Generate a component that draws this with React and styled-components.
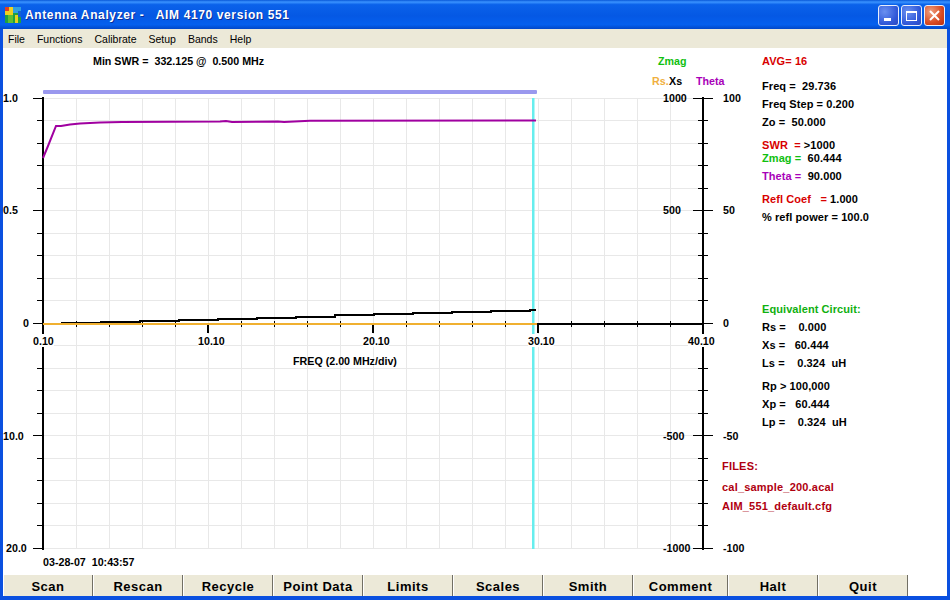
import React from 'react';
import styled, { createGlobalStyle } from 'styled-components';

const Global = createGlobalStyle`
  html, body { margin: 0; padding: 0; background: #fff; }
  #root { width: 950px; height: 600px; overflow: hidden; }
`;

const Window = styled.div`
  width: 950px; height: 600px; display: flex; flex-direction: column; box-sizing: border-box;
  background: #0a50e0; font-family: "Liberation Sans", Arial, sans-serif;
`;
const TitleBar = styled.div`
  height: 29px; flex: none; box-sizing: border-box; display: flex; align-items: center;
  padding: 0 6px 0 5px;
  background: linear-gradient(180deg, #0858d8 0%, #3a93ff 7%, #0a62ea 16%, #0558e4 55%, #0560ee 85%, #0248c8 100%);
`;
const AppIcon = styled.svg` width: 16px; height: 16px; flex: none; margin-right: 4px; `;
const TitleText = styled.div`
  flex: 1; color: #fff; font-weight: 700; font-size: 12px; letter-spacing: 0.62px; white-space: pre;
  text-shadow: 1px 1px 0 #0a2f9a;
`;
const CaptionButtons = styled.div` display: flex; gap: 4px; margin-top: 2px; `;
const CaptionButton = styled.div`
  width: 19px; height: 19px; box-sizing: content-box; border: 1px solid #e8eefc; border-radius: 3px;
  margin: 0 -1px; display: flex; align-items: center; justify-content: center;
  background: ${p => p.$close
    ? 'radial-gradient(circle at 30% 30%, #f0a080, #d84a22 60%, #b83010)'
    : 'radial-gradient(circle at 30% 30%, #6a90f0, #3058d8 65%, #2a48c0)'};
`;
const Frame = styled.div`
  flex: 1; min-height: 0; display: flex; flex-direction: column; margin: 0 3px 4px; background: #fff;
`;
const MenuBar = styled.div`
  height: 19px; flex: none; display: flex; align-items: center; gap: 12px; padding-left: 5px;
  background: #ece9d8; font-size: 10.5px; color: #000;
`;
const MenuItem = styled.span` white-space: nowrap; `;
const Body = styled.div` flex: 1; min-height: 0; display: flex; background: #fff; `;
const Plot = styled.svg` width: 752px; height: 527px; flex: none; display: block; overflow: visible; `;
const PlotLabel = styled.text`
  font: 700 10.7px "Liberation Sans", Arial, sans-serif;
  white-space: pre;
  fill: ${p => p.$color || '#000'};
`;
const Side = styled.div`
  flex: 1; min-width: 0; padding-top: 4px; display: flex; flex-direction: column;
  font-size: 11px; font-weight: 700; letter-spacing: 0.08px;
`;
const Group = styled.div`
  margin-top: ${p => p.$gap || 0}px;
  margin-left: ${p => (p.$wide ? -33 : 7)}px;
  letter-spacing: ${p => (p.$wide ? '0.2px' : 'inherit')};
`;
const Row = styled.div`
  height: 18px; line-height: 18px; white-space: pre; color: ${p => p.$color || '#000'};
  margin-top: ${p => p.$gap || 0}px;
`;
const Tint = styled.span` color: ${p => p.$color}; `;
const ButtonBar = styled.div` height: 21px; flex: none; display: flex; background: #fff; `;
const CmdButton = styled.div`
  width: ${p => p.$w}px; box-sizing: border-box; display: flex; align-items: center; justify-content: center;
  background: #ece9d8; border-left: 1px solid #fff; border-right: 1px solid #716f64;
  font-size: 13px; font-weight: 700; letter-spacing: 0.5px; color: #000; padding-top: 1px;
`;

const RED = '#d80000', GREEN = '#10c010', PURPLE = '#a800b8', DKRED = '#b00010';
const L = 43, R = 703, T = 98, B = 548.5;
const hGrid = Array.from({ length: 21 }, (_, i) => T + 22.5 * i);
const vGrid = Array.from({ length: 21 }, (_, i) => L + 33 * i);
const theta = 'M43 158 L48 146 L56 126 L61 126 L70 124.5 L80 123.5 L100 122.5 L122 122 L220 121.5 L226 121 L232 122 L278 121.5 L284 122 L310 120.8 L536 120.5';
const black = (() => {
  let d = 'M60 323.5';
  for (let x = 62, y = 323; x < 536; x += 39, y -= 1.08) d += ` H${x} V${y.toFixed(1)}`;
  return d + ' H536';
})();

const axisLabels = [['0.10', 33, 21], ['10.10', 198, 26], ['20.10', 363, 26], ['30.10', 528, 26], ['40.10', 688, 26]];
const labels = [
  ['Min SWR =  332.125 @  0.500 MHz', 93, 65],
  ['Zmag', 658, 65, GREEN], ['Rs.', 652, 85, '#f0b040'], ['Xs', 669, 85], ['Theta', 696, 85, PURPLE],
  ['1.0', 3, 102], ['0.5', 3, 214], ['0', 23, 327], ['10.0', 3, 440], ['20.0', 6, 552],
  ['1000', 663, 102], ['500', 663, 214], ['-500', 663, 440], ['-1000', 663, 552],
  ['100', 723, 102], ['50', 723, 214], ['0', 723, 327], ['-50', 723, 440], ['-100', 723, 552],
  ...axisLabels.map(([t, x]) => [t, x, 345]),
  ['FREQ (2.00 MHz/div)', 293, 365],
  ['03-28-07  10:43:57', 43, 566],
];

const buttons = [['Scan', 90], ['Rescan', 90], ['Recycle', 90], ['Point Data', 90], ['Limits', 90], ['Scales', 90], ['Smith', 90], ['Comment', 95], ['Halt', 90], ['Quit', 90]];

export default function App() {
  return (
    <Window>
      <Global />
      <TitleBar>
        <AppIcon viewBox="0 0 16 16">
          <rect width="16" height="16" fill="#20a040" />
          <rect width="8" height="8" fill="#f0d020" />
          <rect x="0" y="0" width="4" height="4" fill="#e04020" />
          <rect x="8" y="0" width="8" height="6" fill="#30a0e0" />
          <rect x="3" y="8" width="5" height="8" fill="#60c030" />
          <rect x="10" y="8" width="3" height="8" fill="#e8d020" />
          <rect x="13" y="4" width="3" height="6" fill="#1860d0" />
        </AppIcon>
        <TitleText>Antenna Analyzer -   AIM 4170 version 551</TitleText>
        <CaptionButtons>
          <CaptionButton>
            <svg width="13" height="13" viewBox="0 0 13 13"><rect x="2" y="9" width="7" height="3" fill="#fff" /></svg>
          </CaptionButton>
          <CaptionButton>
            <svg width="13" height="13" viewBox="0 0 13 13"><rect x="1.5" y="2.5" width="10" height="9" fill="none" stroke="#fff" /><rect x="1" y="2" width="11" height="2" fill="#fff" /></svg>
          </CaptionButton>
          <CaptionButton $close>
            <svg width="13" height="13" viewBox="0 0 13 13"><path d="M2 2 L11 11 M11 2 L2 11" stroke="#fff" strokeWidth="2" /></svg>
          </CaptionButton>
        </CaptionButtons>
      </TitleBar>
      <Frame>
        <MenuBar>
          {['File', 'Functions', 'Calibrate', 'Setup', 'Bands', 'Help'].map(m => <MenuItem key={m}>{m}</MenuItem>)}
        </MenuBar>
        <Body>
          <Plot viewBox="3 48 752 527">
            <g stroke="#e8e8e8" strokeWidth="1" shapeRendering="crispEdges">
              {hGrid.map(y => <line key={y} x1={L} x2={R} y1={y} y2={y} />)}
              {vGrid.map(x => <line key={x} x1={x} x2={x} y1={T} y2={B} />)}
            </g>
            <rect x="43" y="90" width="494" height="4" rx="1" fill="#9a98ee" />
            <rect x="532" y="98" width="2.5" height="451" fill="#66eeee" />
            <g stroke="#000" fill="none" shapeRendering="crispEdges">
              <path d={`M${L} ${T - 1} V${B + 1} M${R} ${T - 1} V${B + 1} M${L} 323.5 H${R}`} strokeWidth="2" />
              {hGrid.map((y, i) => {
                const major = i % 5 === 0;
                return (
                  <path key={y} strokeWidth={1}
                    d={`M${major ? 33 : 37} ${y} H${L} M${major ? 693 : 698} ${y} H${major ? 713 : 708}`} />
                );
              })}
              {vGrid.slice(1).map((x, i) => {
                const major = (i + 1) % 5 === 0;
                return <path key={x} strokeWidth={major ? 2 : 1} d={major ? `M${x} 323 V333` : `M${x} 321 V327`} />;
              })}
              <path d="M43 323 V333" strokeWidth="2" />
            </g>
            <path d={black} stroke="#000" strokeWidth="2" fill="none" shapeRendering="crispEdges" />
            <path d="M43 324 H537" stroke="#f0b030" strokeWidth="2" fill="none" shapeRendering="crispEdges" />
            <path d={theta} stroke="#a000a0" strokeWidth="2" fill="none" />
            {axisLabels.map(([t, x, w]) => <rect key={t} x={x} y={334} width={w} height={13} fill="#fff" />)}
            {labels.map(([t, x, y, c]) => <PlotLabel key={t + x + y} x={x} y={y} $color={c}>{t}</PlotLabel>)}
          </Plot>
          <Side>
            <Group><Row $color={RED}>AVG= 16</Row></Group>
            <Group $gap={7}>
              <Row>Freq =  29.736</Row>
              <Row>Freq Step = 0.200</Row>
              <Row>Zo =  50.000</Row>
            </Group>
            <Group $gap={5}>
              <Row><Tint $color={RED}>SWR  = </Tint>&gt;1000</Row>
              <Row $gap={-5}><Tint $color={GREEN}>Zmag =  </Tint>60.444</Row>
              <Row><Tint $color={PURPLE}>Theta =  </Tint>90.000</Row>
            </Group>
            <Group $gap={5}>
              <Row><Tint $color={RED}>Refl Coef   = </Tint>1.000</Row>
              <Row>% refl power = 100.0</Row>
            </Group>
            <Group $gap={74}>
              <Row $color="#10b010">Equivalent Circuit:</Row>
              <Row>Rs =    0.000</Row>
              <Row>Xs =   60.444</Row>
              <Row>Ls =    0.324  uH</Row>
            </Group>
            <Group $gap={5}>
              <Row>Rp &gt; 100,000</Row>
              <Row>Xp =   60.444</Row>
              <Row>Lp =    0.324  uH</Row>
            </Group>
            <Group $gap={26} $wide>
              <Row $color={DKRED}>FILES:</Row>
              <Row $gap={3} $color={DKRED}>cal_sample_200.acal</Row>
              <Row $gap={1} $color={DKRED}>AIM_551_default.cfg</Row>
            </Group>
          </Side>
        </Body>
        <ButtonBar>
          {buttons.map(([t, w]) => <CmdButton key={t} $w={w}>{t}</CmdButton>)}
        </ButtonBar>
      </Frame>
    </Window>
  );
}
